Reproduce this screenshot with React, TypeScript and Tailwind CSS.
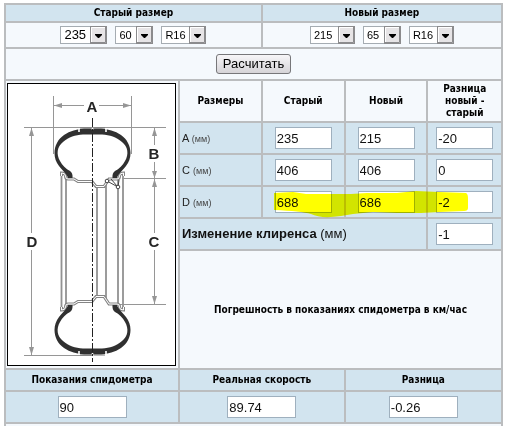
import type { ReactNode } from "react";

const BAR = "border-2 border-[#bbbdbf]";
const PALE = "bg-[#f5f9fd]";
const BLUE = "bg-[#d2e4ef]";

function Heading({ children, span, tone = BLUE }: { children: ReactNode; span?: number; tone?: string }) {
  return (
    <th
      colSpan={span}
      className={`${BAR} ${tone} p-0 text-center font-['DejaVu_Sans_Condensed','Noto_Sans',sans-serif] text-[10px] leading-3 font-bold`}
    >
      {children}
    </th>
  );
}

function SizeSelect({ value, label, big = false }: { value: string; label: string; big?: boolean }) {
  return (
    <span className="relative inline-flex">
      <select
        aria-label={label}
        defaultValue={value}
        className={`h-[18px] appearance-none rounded-none border border-[#a5acb2] bg-white pl-[3px] leading-4 ${
          big ? "w-[47px] text-[13px]" : `text-[11px] ${value.length > 2 ? "w-[45px]" : "w-[38px]"}`
        }`}
      >
        <option>{value}</option>
      </select>
      <svg aria-hidden="true" viewBox="0 0 17 18" className="pointer-events-none absolute top-0 right-0 h-[18px] w-[17px]">
        <rect x="0.5" y="0.5" width="16" height="17" fill="#e6e4e6" stroke="#8b8b8d" />
        <path d="M1.5 16V1.5H15" fill="none" stroke="#fff" />
        <path d="M15.5 1V16.5H1" fill="none" stroke="#8b8b8d" />
        <path d="M5 8H12V9L9 12H8L5 9Z" fill="#000" />
      </svg>
    </span>
  );
}

function Field({ value, label, wide = false }: { value: string; label: string; wide?: boolean }) {
  return (
    <input
      type="text"
      aria-label={label}
      defaultValue={value}
      className={`mx-auto block h-[22px] border border-[#9fb0be] bg-white px-px text-[13px] leading-5 text-[#111] ${wide ? "w-[69px]" : "w-[57px]"}`}
    />
  );
}

function HalfWheel() {
  const rim =
    "M61.5 176V173Q65.5 173 65.500 176Q65.500 179 68 179H74L78 181.500H92L96 186.500H104L109 179H117Q119.500 179 119.500 176Q119.500 173 123.500 173V176";
  return (
    <g>
      <path d={rim} fill="none" stroke="#858585" strokeWidth="3" />
      <path d={rim} fill="none" stroke="#fff" />
      <path
        d="M68 178C67 174 62 170 59 166C56 162 54.500 158 54.500 153C54.500 146 58 139 64 135C70 131 77 129 84 128.500H101C108 129 115 131 121 135C127 139 130.500 146 130.500 153C130.500 158 129 162 126 166C123 170 118 174 117 178L112.500 178Q112 173 115 171C119 169 123 165 125 161C129 154 128 147 122 142C116 137 110 135 102 134.500H83C75 135 69 137 63 142C57 147 56 154 60 161C62 165 66 169 70 171Q73 173 72.500 178Z"
        fill="#303030"
      />
      <path d="M79 128V132M92.500 128V130M106 128V132" stroke="#fff" strokeWidth="1.600" />
      <path d="M80 128H91.500M93.500 128H105" stroke="#777" />
    </g>
  );
}

function WheelDiagram() {
  return (
    <svg
      role="img"
      aria-label="Схема колеса"
      viewBox="7 83 169 283"
      className="block h-[283px] w-[169px] bg-white font-['Liberation_Sans',Arial,sans-serif]"
    >
      <rect x="7.500" y="83.500" width="168" height="282" fill="#fff" stroke="#000" />
      <g stroke="#969696" fill="none">
        <path d="M53.500 96V154M131.500 96V154M54 105.500H84M99 105.500H131" />
        <path d="M24 127.500H166M24 355.500H92M122 178.500H166M118 304.500H166" />
        <path d="M31.500 128V233M31.500 250V355M154.500 128V145M154.500 162V178M154.500 179V233M154.500 250V304" />
      </g>
      <g fill="#969696">
        <path d="M54 105.500L62 103V108ZM131 105.500L123 103V108Z" />
        <path d="M31.500 128L34 136H29ZM31.500 355L34 347H29Z" />
        <path d="M154.500 128L157 136H152ZM154.500 178L157 171H152Z" />
        <path d="M154.500 179L157 187H152ZM154.500 304L157 296H152Z" />
      </g>
      <path
        d="M61.500 176V307M66 179V304M97 187V296M106 184V299M118 179V304M123 176V307"
        stroke="#929292"
        strokeWidth="1.800"
      />
      <HalfWheel />
      <g transform="matrix(1 0 0 -1 0 483)">
        <HalfWheel />
      </g>
      <g fill="#fff" stroke="#444">
        <path d="M107 181L118 187L119 180M111 179L117 186" fill="none" />
        <circle cx="107" cy="181" r="1.800" />
        <circle cx="118" cy="187" r="1.800" />
      </g>
      <path d="M92.500 118V362" stroke="#222" strokeDasharray="9 2 2 2" />
      <g fill="#252525" fontSize="15" fontWeight="bold" textAnchor="middle">
        <text x="92" y="112">A</text>
        <text x="154" y="159">B</text>
        <text x="154" y="247">C</text>
        <text x="32" y="247">D</text>
      </g>
    </svg>
  );
}

const rows = [
  { name: "A", before: "235", after: "215", diff: "-20" },
  { name: "C", before: "406", after: "406", diff: "0" },
  { name: "D", before: "688", after: "686", diff: "-2", marked: true },
];

export default function App() {
  return (
    <main className="h-screen overflow-hidden bg-white pt-[3px] pr-0.5 pl-1 font-['Liberation_Sans',Arial,sans-serif] text-black">
      <table className="w-full table-fixed border-collapse">
        <colgroup>
          <col className="w-[174px]" />
          <col />
          <col />
          <col />
          <col className="w-[15%]" />
        </colgroup>
        <tbody>
          <tr className="h-[18px]">
            <Heading span={2}>Старый размер</Heading>
            <Heading span={3}>Новый размер</Heading>
          </tr>
          <tr className="h-[26px]">
            <td colSpan={2} className={`${BAR} ${PALE} p-0`}>
              <div className="flex items-baseline justify-center gap-2">
                <SizeSelect big value="235" label="Старая ширина" />
                <SizeSelect value="60" label="Старый профиль" />
                <SizeSelect value="R16" label="Старый диаметр" />
              </div>
            </td>
            <td colSpan={3} className={`${BAR} ${PALE} p-0`}>
              <div className="flex items-baseline justify-center gap-2">
                <SizeSelect value="215" label="Новая ширина" />
                <SizeSelect value="65" label="Новый профиль" />
                <SizeSelect value="R16" label="Новый диаметр" />
              </div>
            </td>
          </tr>
          <tr className="h-8">
            <td colSpan={5} className={`${BAR} ${PALE} p-0 text-center`}>
              <button
                type="button"
                className="mx-auto block h-5 w-[75px] rounded-[3px] border border-[#77777a] bg-linear-to-b from-[#f7f6f8] to-[#d6d4d8] text-[13px] leading-4 whitespace-nowrap"
              >
                Расчитать
              </button>
            </td>
          </tr>
          <tr className="h-[42px]">
            <td rowSpan={6} className={`${BAR} ${PALE} p-0 pl-px`}>
              <WheelDiagram />
            </td>
            <Heading tone={PALE}>Размеры</Heading>
            <Heading tone={PALE}>Старый</Heading>
            <Heading tone={PALE}>Новый</Heading>
            <Heading tone={PALE}>
              Разница
              <br />
              новый -<br />
              старый
            </Heading>
          </tr>
          {rows.map((row) => (
            <tr key={row.name} className="h-8">
              <th scope="row" className={`${BAR} ${BLUE} p-0 pl-0.5 text-left text-[11px] font-normal text-[#222]`}>
                {row.name} <span className="text-[9px] text-[#444]">(мм)</span>
              </th>
              <td className={`${BAR} ${BLUE} relative p-0`}>
                <Field value={row.before} label={`${row.name} старый`} />
                {row.marked && (
                  <svg
                    aria-hidden="true"
                    viewBox="262 187 210 32"
                    className="pointer-events-none absolute top-0 left-0 z-10 h-8 w-[210px] mix-blend-multiply"
                  >
                    <path
                      d="M273 193L292 192L305 194H350L366 193H396L415 191L438 192L465 193Q467 194 467 198V208Q467 211 463 211L438 212L420 213H396L372 212L352 214L340 216Q320 219 310 214Q300 211 273 210Z"
                      fill="#ff0"
                    />
                  </svg>
                )}
              </td>
              <td className={`${BAR} ${BLUE} p-0`}>
                <Field value={row.after} label={`${row.name} новый`} />
              </td>
              <td className={`${BAR} ${BLUE} p-0`}>
                <Field value={row.diff} label={`${row.name} разница`} />
              </td>
            </tr>
          ))}
          <tr className="h-8">
            <th scope="row" colSpan={3} className={`${BAR} ${BLUE} p-0 pl-0.5 text-left text-[13px] font-bold text-[#111]`}>
              Изменение клиренса <span className="font-normal">(мм)</span>
            </th>
            <td className={`${BAR} ${BLUE} p-0`}>
              <Field value="-1" label="Изменение клиренса" />
            </td>
          </tr>
          <tr className="h-[119px]">
            <Heading span={4} tone={PALE}>
              Погрешность в показаниях спидометра в км/час
            </Heading>
          </tr>
          <tr className="h-[22px]">
            <Heading>Показания спидометра</Heading>
            <Heading span={2}>Реальная скорость</Heading>
            <Heading span={2}>Разница</Heading>
          </tr>
          <tr className="h-8">
            <td className={`${BAR} ${BLUE} p-0`}>
              <Field wide value="90" label="Показания спидометра" />
            </td>
            <td colSpan={2} className={`${BAR} ${BLUE} p-0`}>
              <Field wide value="89.74" label="Реальная скорость" />
            </td>
            <td colSpan={2} className={`${BAR} ${BLUE} p-0`}>
              <Field wide value="-0.26" label="Разница" />
            </td>
          </tr>
          <tr className="h-8">
            <td colSpan={5} className={`${BAR} ${PALE} p-0`} />
          </tr>
        </tbody>
      </table>
    </main>
  );
}
